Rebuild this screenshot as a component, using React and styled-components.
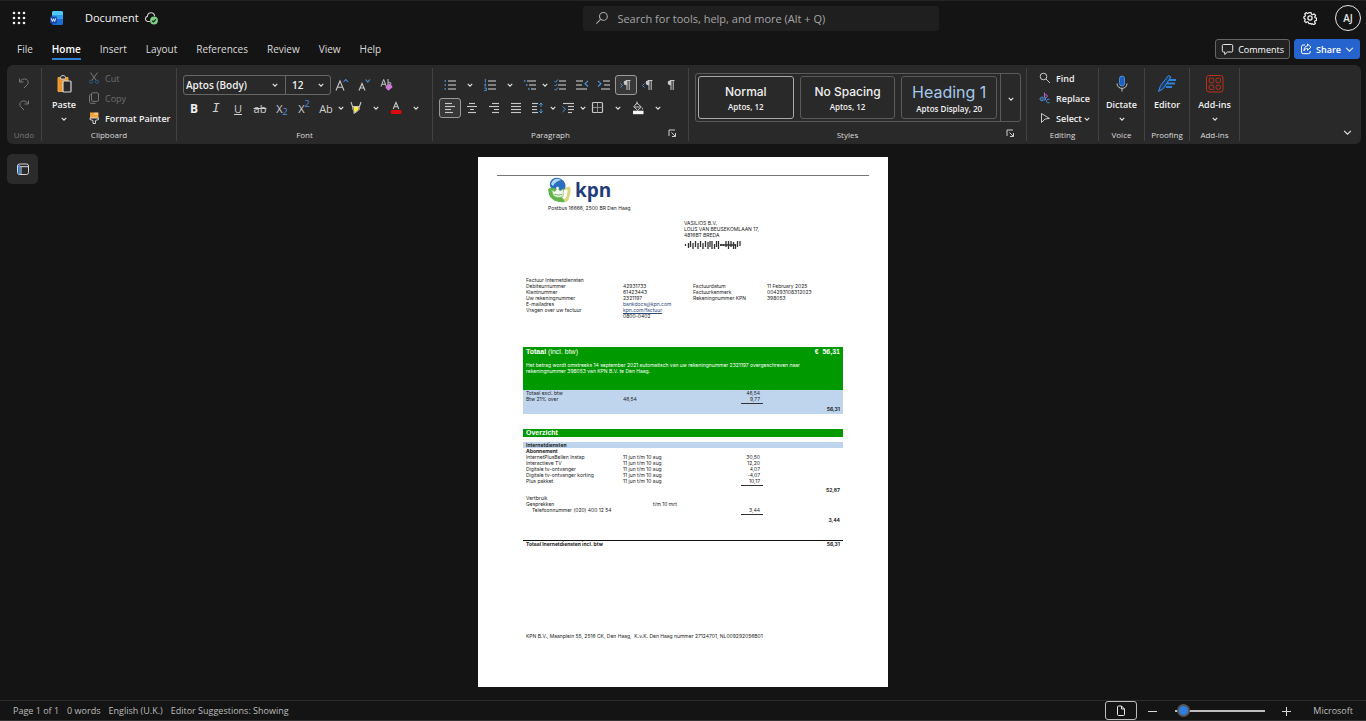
import { useState } from 'react'
import styled, { createGlobalStyle } from 'styled-components'

const tabs = ['File', 'Home', 'Insert', 'Layout', 'References', 'Review', 'View', 'Help']

const subscriptions = [
    { name: 'InternetPlusBellen Instap', period: '11 jun t/m 10 aug', amount: '30,50' },
    { name: 'Interactieve TV', period: '11 jun t/m 10 aug', amount: '12,20' },
    { name: 'Digitale tv-ontvanger', period: '11 jun t/m 10 aug', amount: '4,07' },
    { name: 'Digitale tv-ontvanger korting', period: '11 jun t/m 10 aug', amount: '-4,07' },
    { name: 'Plus pakket', period: '11 jun t/m 10 aug', amount: '10,17' },
]

const GREY = '#c8c8c8'
const BLUE = '#4a94e0'

export default function App() {
    return (
        <>
            <GlobalStyle />
            <Page>
                <TopBar />
                <MenuBar />
                <Ribbon />
                <Workspace>
                    <NavButton aria-label="Navigation pane">
                        <svg width="14" height="14" viewBox="0 0 14 14" fill="none">
                            <rect x="1.5" y="2" width="11" height="10.5" rx="2" stroke="#d5d5d5" />
                            <path d="M2 4.7H12.5M5 4.7V12.5" stroke="#d5d5d5" />
                            <path d="M3.3 3V12" stroke="#3f8ae0" strokeWidth="2" />
                        </svg>
                    </NavButton>
                    <Invoice />
                </Workspace>
                <StatusBar />
            </Page>
        </>
    )
}

function TopBar() {
    return (
        <Top>
            <TopLeft>
                <PlainButton aria-label="App launcher">
                    <svg width="14" height="14" viewBox="0 0 14 14" fill="#f0f0f0">
                        {[2, 7, 12].map(y => [2, 7, 12].map(x => <circle key={`${x}-${y}`} cx={x} cy={y} r="1.3" />))}
                    </svg>
                </PlainButton>
                <WordLogo />
                <DocumentName>
                    Document
                    <svg width="15" height="14" viewBox="0 0 15 14" fill="none">
                        <path d="M6 10.5H3.6A2.6 2.6 0 0 1 3.4 5.4C3.6 3.2 5 1.8 7 1.8S10.5 3.2 10.7 5.2" stroke="#d0d0d0" strokeWidth="1.1" />
                        <circle cx="10" cy="9.5" r="3.9" fill="#7fd087" />
                        <path d="M8.2 9.6L9.5 10.9L11.8 8.3" stroke="#141414" strokeWidth="1.1" />
                    </svg>
                </DocumentName>
            </TopLeft>
            <SearchBox>
                <svg width="14" height="14" viewBox="0 0 14 14" fill="none" stroke="#a8a8a8" strokeWidth="1.1">
                    <circle cx="8.4" cy="5.4" r="3.9" />
                    <path d="M5.6 8.3L1.3 12.6" />
                </svg>
                <input type="search" aria-label="Search" placeholder="Search for tools, help, and more (Alt + Q)" />
            </SearchBox>
            <TopRight>
                <PlainButton aria-label="Settings">
                    <svg width="14" height="14" viewBox="0 0 24 24" fill="none" stroke="#f0f0f0" strokeWidth="2.2" strokeLinejoin="round">
                        <path d="M10 2h4l.7 3 2.1.9 2.7-1.6 2.6 2.7-1.6 2.7.6 1.5 2.6.8v4l-2.6.7-.9 2 1.6 2.6-2.7 2.6-2.6-1.6-1.9.8L14 22h-4l-.8-2.6-2-.8-2.5 1.5L2 17.500l1.500-2.600-.8-1.900L1 12.300V9.700l2-1 .9-2L2.400 4.500 4.900 2l2.500 1.500 1.900-.8z" transform="translate(.6 .8) scale(.95)" />
                        <circle cx="12" cy="12" r="3.600" />
                    </svg>
                </PlainButton>
                <Avatar aria-label="Account">AJ</Avatar>
            </TopRight>
        </Top>
    )
}

function WordLogo() {
    return (
        <svg width="15" height="16" viewBox="0 0 15 16">
            <rect x="2" y="1" width="11" height="14" rx="1.6" fill="#1b6fd0" />
            <path d="M2 2.600A1.600 1.600 0 0 1 3.600 1H11.400A1.600 1.600 0 0 1 13 2.600V5.500H2Z" fill="#4fc9f5" />
            <path d="M2 5.500H13V9H2Z" fill="#2f9cf0" />
            <rect x="0" y="6.500" width="7" height="7" rx="1.200" fill="#1746a8" />
            <path d="M1.300 8.300L2.400 11.500L3.500 8.800L4.600 11.500L5.700 8.300" stroke="#fff" fill="none" strokeWidth=".9" />
        </svg>
    )
}

function MenuBar() {
    const [active, setActive] = useState('Home')

    return (
        <Menu>
            <Tabs>
                {tabs.map(tab => (
                    <Tab key={tab} $active={tab === active} onClick={() => setActive(tab)}>{tab}</Tab>
                ))}
            </Tabs>
            <Actions>
                <ActionButton>
                    <svg width="13" height="13" viewBox="0 0 13 13" fill="none" stroke="#e8e8e8">
                        <path d="M2.500 1.500H10.500A1.200 1.200 0 0 1 11.700 2.700V7.800A1.200 1.200 0 0 1 10.500 9H6.500L3.700 11.500V9H2.500A1.200 1.200 0 0 1 1.300 7.800V2.700A1.200 1.200 0 0 1 2.500 1.500Z" />
                    </svg>
                    Comments
                </ActionButton>
                <ActionButton $primary>
                    <svg width="12" height="12" viewBox="0 0 12 12" fill="none" stroke="#fff">
                        <path d="M5 2H3.200A1.700 1.700 0 0 0 1.500 3.700V9A1.700 1.700 0 0 0 3.200 10.700H8.500A1.700 1.700 0 0 0 10.200 9V8" />
                        <path d="M7.500 1L11 4.200L7.500 7.200V5.500C5.600 5.400 4.600 6.300 4 7.800C4 5 5.200 3.100 7.500 2.900Z" strokeLinejoin="round" />
                    </svg>
                    Share
                    <Chevron size={9} />
                </ActionButton>
            </Actions>
        </Menu>
    )
}

function Chevron({ size = 6 }) {
    return (
        <svg width={size} height={size} viewBox="0 0 8 8" fill="none">
            <path d="M1 2.500L4 5.500L7 2.500" stroke="#e4e4e4" strokeWidth={size > 6 ? 1 : 1.500} />
        </svg>
    )
}

function More({ label, wide }) {
    return <MoreButton aria-label={label} $wide={wide}><Chevron /></MoreButton>
}

function Launcher({ label }) {
    return (
        <LauncherButton aria-label={label}>
            <svg width="9" height="9" viewBox="0 0 9 9" fill="none" stroke="#d0d0d0">
                <path d="M1 7V1H7M3.500 3.500L7.300 7.300M7.500 4V7.500H4" />
            </svg>
        </LauncherButton>
    )
}

// list and alignment glyphs share one 14px box; each line is [x1, x2, y]
function Lines({ lines, children }) {
    return (
        <svg width="14" height="14" viewBox="0 0 14 14" fill="none">
            {lines.map(([from, to, y]) => (
                <path key={y} d={`M${from} ${y}H${to}`} stroke={GREY} strokeWidth="1.100" />
            ))}
            {children}
        </svg>
    )
}

function Ribbon() {
    return (
        <RibbonBar>
            <Group $width={35}>
                <Stack $center $pad={5} $gap={2}>
                    <Tool aria-label="Undo">
                        <svg width="12" height="12" viewBox="0 0 12 12" fill="none" stroke="#7a7a7a">
                            <path d="M1.500 1.500V5H5.500M1.700 4.800C3.500 2.300 6 1.300 8.200 2.300S10.800 6 9.300 7.700L6 11" />
                        </svg>
                    </Tool>
                    <Tool aria-label="Redo">
                        <svg width="12" height="12" viewBox="0 0 12 12" fill="none" stroke="#7a7a7a">
                            <path d="M10.500 1.500V5H6.500M10.300 4.800C8.500 2.300 6 1.300 3.800 2.300S1.200 6 2.700 7.700L6 11" />
                        </svg>
                    </Tool>
                </Stack>
                <GroupLabel $muted>Undo</GroupLabel>
            </Group>

            <Group $width={135}>
                <Row $tall>
                    <BigButton $width={44}>
                        <svg width="20" height="20" viewBox="0 0 20 20" fill="none">
                            <path d="M4 3.500H14V7H9V17.500H4Z" fill="#e8962e" stroke="#f0a23c" strokeLinejoin="round" />
                            <path d="M6.500 3.500A2.500 2 0 0 1 11.500 3.500V5H6.500Z" fill="#292929" stroke="#c8c8c8" />
                            <rect x="9" y="7" width="8" height="11" rx="1" fill="#292929" stroke="#d8d8d8" strokeWidth="1.200" />
                        </svg>
                        Paste
                        <Chevron />
                    </BigButton>
                    <Stack $left={2}>
                        <TextButton disabled>
                            <svg width="12" height="12" viewBox="0 0 12 12" fill="none">
                                <path d="M2.500 .5L8.200 8.500M9.500 .5L3.800 8.500" stroke="#7a7a7a" />
                                <circle cx="3" cy="9.700" r="1.600" stroke="#2f5a85" />
                                <circle cx="9" cy="9.700" r="1.600" stroke="#2f5a85" />
                            </svg>
                            Cut
                        </TextButton>
                        <TextButton disabled>
                            <svg width="12" height="12" viewBox="0 0 12 12" fill="none" stroke="#777">
                                <rect x="3.500" y=".8" width="7" height="8.500" rx="1.200" />
                                <path d="M3.200 2.500C2 2.500 1.500 3 1.500 4V9.500C1.500 10.700 2.200 11.300 3.200 11.300H7.500" />
                            </svg>
                            Copy
                        </TextButton>
                        <TextButton>
                            <svg width="12" height="12" viewBox="0 0 12 12" fill="none">
                                <rect x="2" y=".5" width="8.500" height="5.500" fill="#f2a33a" />
                                <path d="M7 .5V3M9 .5V3" stroke="#fff" strokeWidth=".7" />
                                <path d="M2 6H10.500V7.500L7.500 8.500V11.500H5V8.500L2 7.500Z" fill="#292929" stroke="#e0e0e0" strokeWidth=".9" />
                            </svg>
                            Format Painter
                        </TextButton>
                    </Stack>
                </Row>
                <GroupLabel>Clipboard</GroupLabel>
            </Group>

            <Group $width={256}>
                <Stack $pad={7} $left={6} $gap={3}>
                    <Row>
                        <Combo>
                            <Picker $width={101}>
                                <select aria-label="Font"><option>Aptos (Body)</option></select>
                                <Chevron />
                            </Picker>
                            <Picker $width={45} $size>
                                <select aria-label="Font size"><option>12</option></select>
                                <Chevron />
                            </Picker>
                        </Combo>
                        <Tool aria-label="Grow font">
                            <svg width="14" height="14" viewBox="0 0 14 14" fill="none">
                                <path d="M1 12.500L5 3L9 12.500M2.500 9.200H7.500" stroke={GREY} strokeWidth="1.100" />
                                <path d="M8.500 4L10.800 1.500L13 4" stroke={BLUE} strokeWidth="1.100" />
                            </svg>
                        </Tool>
                        <Tool aria-label="Shrink font">
                            <svg width="14" height="14" viewBox="0 0 14 14" fill="none">
                                <path d="M2 12.500L5 5.500L8 12.500M3.200 10H6.800" stroke={GREY} strokeWidth="1.100" />
                                <path d="M8.500 1.500L10.800 4L13 1.500" stroke={BLUE} strokeWidth="1.100" />
                            </svg>
                        </Tool>
                        <Tool aria-label="Clear formatting">
                            <svg width="14" height="14" viewBox="0 0 14 14" fill="none">
                                <path d="M2 8.500L4.700 1.500L7.300 8.500M3 6.200H6.500M9 1V8.500M9 5.200C9.500 4 12 4 12 6" stroke={GREY} />
                                <rect x="7" y="6.500" width="6" height="5" rx="1.200" transform="rotate(-40 10 9)" fill="#cf78d6" />
                            </svg>
                        </Tool>
                    </Row>
                    <Row>
                        <Tool aria-label="Bold"><b>B</b></Tool>
                        <Tool aria-label="Italic"><Slanted>I</Slanted></Tool>
                        <Tool aria-label="Underline"><u>U</u></Tool>
                        <Tool aria-label="Strikethrough"><s>ab</s></Tool>
                        <Tool aria-label="Subscript">X<Script as="sub">2</Script></Tool>
                        <Tool aria-label="Superscript">X<Script>2</Script></Tool>
                        <Tool aria-label="Change case">Ab</Tool>
                        <More label="Case options" />
                        <Tool aria-label="Highlight">
                            <svg width="14" height="14" viewBox="0 0 14 14" fill="none">
                                <path d="M2 1L3.500 5.500H10.500L12 1" stroke={GREY} strokeWidth="1.100" />
                                <path d="M4.300 6H9.700V8.500L5.500 12Z" fill="#ffef3c" />
                                <path d="M3.800 5.500V8.500L5 9.700V12.500L9 9.700L10.200 8.500V5.500" stroke={GREY} />
                            </svg>
                        </Tool>
                        <More label="Highlight colours" wide />
                        <Tool aria-label="Font colour">
                            <svg width="14" height="14" viewBox="0 0 14 14" fill="none">
                                <path d="M4.200 8L7 1.500L9.800 8M5.200 5.800H8.800" stroke={GREY} strokeWidth="1.100" />
                                <rect x="2" y="9" width="10.500" height="4" fill="#dc0a0a" />
                            </svg>
                        </Tool>
                        <More label="Font colours" wide />
                    </Row>
                </Stack>
                <GroupLabel>Font</GroupLabel>
            </Group>

            <Group $width={256}>
                <Stack $pad={7} $left={6} $gap={3}>
                    <Row>
                        <Tool aria-label="Bullets">
                            <Lines lines={[[5, 13, 3], [5, 13, 7], [5, 13, 11]]}>
                                <path d="M1.500 3H3M1.500 7H3M1.500 11H3" stroke={BLUE} strokeWidth="1.500" />
                            </Lines>
                        </Tool>
                        <More label="Bullet styles" wide />
                        <Tool aria-label="Numbering">
                            <Lines lines={[[5, 13, 3], [5, 13, 7], [5, 13, 11]]}>
                                <path d="M2.300 1V4.500M1.300 7H3.300M2.300 5.500V8.500M1.300 10H3.300V12.500H1.300" stroke={BLUE} />
                            </Lines>
                        </Tool>
                        <More label="Number styles" wide />
                        <Tool aria-label="Multilevel list">
                            <Lines lines={[[4, 13, 3], [6, 13, 7], [8, 13, 11]]}>
                                <path d="M1 3H2.500M3 7H4.500M5 11H6.500" stroke={BLUE} strokeWidth="1.500" />
                            </Lines>
                        </Tool>
                        <More label="List styles" />
                        <Tool aria-label="Checklist">
                            <Lines lines={[[6, 13, 3], [5, 13, 7], [6, 13, 11]]}>
                                <path d="M1.500 3L2.700 4.200L5 1.500M1.500 7L2.500 8L4 6M1.500 11L2.700 12.200L5 9.500" stroke={BLUE} />
                            </Lines>
                        </Tool>
                        <Tool aria-label="Decrease indent">
                            <Lines lines={[[1, 8, 3], [1, 7, 7], [1, 12, 11]]}>
                                <path d="M13 3L10 5.700L13 8.500" stroke={BLUE} strokeWidth="1.100" />
                            </Lines>
                        </Tool>
                        <Tool aria-label="Increase indent">
                            <Lines lines={[[6, 13, 3], [7, 13, 7], [4, 13, 11]]}>
                                <path d="M1 3L4 5.700L1 8.500" stroke={BLUE} strokeWidth="1.100" />
                            </Lines>
                        </Tool>
                        <Tool aria-label="Left to right" $on>
                            <Pilcrow d="M1.500 5.500L3.500 7.500L1.500 9.500" />
                        </Tool>
                        <Tool aria-label="Right to left">
                            <Pilcrow d="M3.500 5.500L1.500 7.500L3.500 9.500" />
                        </Tool>
                        <Tool aria-label="Show paragraph marks">
                            <Pilcrow />
                        </Tool>
                    </Row>
                    <Row>
                        <Tool aria-label="Align left" $on>
                            <Lines lines={[[2, 9, 2.500], [2, 12, 5.500], [2, 8, 8.500], [2, 10, 11.500]]} />
                        </Tool>
                        <Tool aria-label="Centre">
                            <Lines lines={[[4, 10, 2.500], [2, 12, 5.500], [5, 9, 8.500], [3, 11, 11.500]]} />
                        </Tool>
                        <Tool aria-label="Align right">
                            <Lines lines={[[5, 12, 2.500], [2, 12, 5.500], [7, 12, 8.500], [5, 12, 11.500]]} />
                        </Tool>
                        <Tool aria-label="Justify">
                            <Lines lines={[[2, 12, 2.500], [2, 12, 5.500], [2, 12, 8.500], [2, 12, 11.500]]} />
                        </Tool>
                        <Tool aria-label="Line spacing">
                            <Lines lines={[[1, 7, 2.500], [1, 6, 5.500], [1, 6, 8.500], [1, 7, 11.500]]}>
                                <path d="M10 2V6M10 8V12M8.300 3.800L10 2L11.700 3.800M8.300 10.200L10 12L11.700 10.200" stroke={BLUE} />
                            </Lines>
                        </Tool>
                        <More label="Line spacing options" />
                        <Tool aria-label="Special indent">
                            <Lines lines={[[2, 13, 2.500], [7, 13, 5.500], [7, 13, 8.500], [7, 11, 11.500]]}>
                                <path d="M1.500 5.500L4.500 8.200L1.500 11" stroke={BLUE} />
                            </Lines>
                        </Tool>
                        <More label="Indent options" />
                        <Tool aria-label="Borders">
                            <svg width="14" height="14" viewBox="0 0 14 14" fill="none" stroke={GREY}>
                                <rect x="1.500" y="1.500" width="10" height="10" rx="1" strokeWidth="1.200" />
                                <path d="M6.500 2V11.500M2 6.500H11.500" stroke="#8a8a8a" />
                            </svg>
                        </Tool>
                        <More label="Border options" wide />
                        <Tool aria-label="Shading">
                            <svg width="14" height="14" viewBox="0 0 14 14" fill="none">
                                <path d="M6 .5V3.500M6 2L10.300 6L6.500 9.300L2.700 5.800L6 2M3.200 6H9.800" stroke={GREY} />
                                <path d="M11.500 6.500C12.300 7.500 12.300 8.500 11.500 8.500S10.700 7.500 11.500 6.500Z" fill={GREY} />
                                <rect x="2" y="9.700" width="10.500" height="3.500" fill="#f2f6fa" />
                            </svg>
                        </Tool>
                        <More label="Shading colours" wide />
                    </Row>
                </Stack>
                <LabelRow>
                    <GroupLabel>Paragraph</GroupLabel>
                    <Launcher label="Paragraph settings" />
                </LabelRow>
            </Group>

            <Group $width={338}>
                <Stack $pad={5} $left={6}>
                    <Gallery>
                        <StyleCard $selected>Normal<small>Aptos, 12</small></StyleCard>
                        <StyleCard>No Spacing<small>Aptos, 12</small></StyleCard>
                        <StyleCard $heading>Heading 1<small>Aptos Display, 20</small></StyleCard>
                        <GalleryMore aria-label="More styles"><Chevron /></GalleryMore>
                    </Gallery>
                </Stack>
                <LabelRow>
                    <GroupLabel>Styles</GroupLabel>
                    <Launcher label="Style settings" />
                </LabelRow>
            </Group>

            <Group $width={72}>
                <Stack $left={12}>
                    <TextButton>
                        <svg width="12" height="12" viewBox="0 0 12 12" fill="none" stroke={GREY}>
                            <circle cx="4.500" cy="4.500" r="3.300" />
                            <path d="M7 7L11 11" />
                        </svg>
                        Find
                    </TextButton>
                    <TextButton>
                        <svg width="12" height="12" viewBox="0 0 12 12" fill="none">
                            <path d="M5.500 .5V5.500M5.500 3.500C6 2.300 8.500 2.500 8.300 4.200S6 5.700 5.500 4.700" stroke="#b46ac0" />
                            <path d="M4.500 5.500C2.500 4.500 1 5.500 1 7S2.500 9.200 4.500 8.300M2.500 7H7M5.500 5.500L7 7L5.500 8.500M10.500 7.500C8.500 6.500 7.500 8 7.500 9.200S9 11.500 10.500 10.500" stroke={BLUE} />
                        </svg>
                        Replace
                    </TextButton>
                    <TextButton>
                        <svg width="12" height="12" viewBox="0 0 12 12" fill="none" stroke={GREY}>
                            <path d="M2.500 1.500L10.500 6.500L6 7L2.500 10.500Z" strokeLinejoin="round" />
                        </svg>
                        <span>Select <Chevron /></span>
                    </TextButton>
                </Stack>
                <GroupLabel>Editing</GroupLabel>
            </Group>

            <Group $width={46}>
                <BigButton>
                    <svg width="20" height="20" viewBox="0 0 20 20" fill="none">
                        <rect x="7.500" y="2" width="5" height="10" rx="2.500" fill="#1c5fc4" stroke="#5aa0f0" strokeWidth=".8" />
                        <path d="M5 9.500C5 16 15 16 15 9.500M10 14.500V17.500" stroke={GREY} />
                    </svg>
                    Dictate
                    <Chevron />
                </BigButton>
                <GroupLabel>Voice</GroupLabel>
            </Group>

            <Group $width={45}>
                <BigButton>
                    <svg width="20" height="20" viewBox="0 0 20 20" fill="none">
                        <path d="M12 6H19M10 9.500H18M9 13H15" stroke="#2f83e0" strokeWidth="2" />
                        <path d="M1.500 17.500L3.500 11.500L11.500 1.500L14 3L6.500 14.500Z" fill="#1d3f70" stroke="#3f8ee6" strokeLinejoin="round" />
                    </svg>
                    Editor
                </BigButton>
                <GroupLabel>Proofing</GroupLabel>
            </Group>

            <Group $width={50}>
                <BigButton>
                    <svg width="20" height="20" viewBox="0 0 20 20" fill="none" stroke="#b8321c">
                        <rect x="1.500" y="1.500" width="16.500" height="16.500" rx="2.500" />
                        <rect x="4.200" y="4.200" width="4.500" height="4.500" rx="1" />
                        <rect x="11" y="4.200" width="4.500" height="4.500" rx="1" />
                        <rect x="4.200" y="11" width="4.500" height="4.500" rx="1" />
                        <rect x="11" y="11" width="4.500" height="4.500" rx="2" />
                    </svg>
                    Add-ins
                    <Chevron />
                </BigButton>
                <GroupLabel>Add-ins</GroupLabel>
            </Group>

            <Collapse aria-label="Collapse ribbon"><Chevron size={9} /></Collapse>
        </RibbonBar>
    )
}

function Pilcrow({ d }) {
    return (
        <svg width="14" height="14" viewBox="0 0 14 14" fill="none">
            {d && <path d={d} stroke={BLUE} />}
            <path d="M11 2.500H7A2.300 2.300 0 0 0 7 7.200H8V2.500Z" fill={GREY} />
            <path d="M8 2.500V12M10.200 2.500V12M7 2.500H11.500" stroke={GREY} />
        </svg>
    )
}

function Invoice() {
    return (
        <Sheet>
            <TopRule />
            <Brand>
                <svg width="25" height="27" viewBox="0 0 25 27">
                    <path d="M13 11.500L22 9.500C23.500 15 21.500 21 19 25L11 23Z" fill="#d9d67c" />
                    <path d="M15 13.500L19.500 12.500C20 16 18.500 19.500 17 22L13 21Z" fill="#fff" />
                    <ellipse cx="9.700" cy="8" rx="8" ry="7" transform="rotate(25 9.700 8)" fill="#2a6fc0" />
                    <path d="M3 7C4.500 2 9.500 .5 13 3C10 4 6.500 5.500 5 9Z" fill="#b4d6f4" />
                    <path d="M0 12C4 9.500 7 11 9 12.500L17 25C10 26 3 23 1 17.500Z" fill="#5fb54a" />
                    <path d="M3.500 13L7 14.500L9.500 10.500L12 14L15.500 12L15 19.500C11.500 21 8 20.500 5.500 18.500Z" fill="#f4f8f0" stroke="#8cbf6a" strokeWidth=".8" />
                    <path d="M6.500 17.200C9 18.200 12 18.200 14 17.500" stroke="#5fb54a" fill="none" />
                    <circle cx="9.500" cy="11" r="1.300" fill="#fff" />
                </svg>
                kpn
            </Brand>
            <Sender>Postbus 16666, 2500 BR Den Haag</Sender>
            <Recipient>
                VASILIOS B.V.<br />
                LOUS VAN BEUSEKOMLAAN 17,<br />
                4816BT BREDA
                <svg width="58" height="8" viewBox="0 0 58 8" stroke="#333" strokeWidth="1.300" fill="none">
                    <path d="M1.500 3V5M4.500 2V7M6.500 0V6M9 2V8M11.500 0V6M14 2V8M16.500 0V6M19 2V8M21.500 0V6M24 1V8M26 0V6M28 0V8M30.500 3V8M32.500 0V6M34.500 0V8M37 3V5M39.500 3V5M42 0V6M44.500 0V8M47 0V6M49.500 1V8M51.500 3V8M53.500 0V6M56 0V5M36 4H52" />
                </svg>
            </Recipient>
            <Details>
                <div>
                    Factuur Internetdiensten<br />
                    Debiteurnummer<br />
                    Klantnummer<br />
                    Uw rekeningnummer<br />
                    E-mailadres<br />
                    Vragen over uw factuur
                </div>
                <div>
                    <br />
                    42931733<br />
                    61423443<br />
                    2321197<br />
                    <MailLink href="#mail">bankdocs@kpn.com</MailLink><br />
                    <MailLink href="#factuur" $underline>kpn.com/factuur</MailLink><br />
                    0800-0402
                </div>
                <div>
                    <br />
                    Factuurdatum<br />
                    Factuurkenmerk<br />
                    Rekeningnummer KPN
                </div>
                <div>
                    <br />
                    11 February 2025<br />
                    004293108312023<br />
                    398053
                </div>
            </Details>
            <TotalBox>
                <TotalTitle>
                    <span><b>Totaal</b> (incl. btw)</span>
                    <b>€&nbsp; 56,31</b>
                </TotalTitle>
                <p>
                    Het betrag wordt omstreeks 14 september 2021 automatisch van uw rekeningnummer 2321197 overgeschreven naar<br />
                    rekeningnummer 398053 van KPN B.V. te Den Haag.
                </p>
            </TotalBox>
            <Table $tinted>
                <Columns />
                <tbody>
                    <tr><td>Totaal excl. btw</td><td /><Amount>46,54</Amount><td /></tr>
                    <tr><td>Btw 21% over</td><td>46,54</td><Amount $line>9,77</Amount><td /></tr>
                    <SumRow><td colSpan="3" /><Amount>56,31</Amount></SumRow>
                </tbody>
            </Table>
            <SectionTitle>Overzicht</SectionTitle>
            <Table>
                <Columns />
                <tbody>
                    <SubHead><th colSpan="4">Internetdiensten</th></SubHead>
                    <tr><th colSpan="4">Abonnement</th></tr>
                    {subscriptions.map((item, i) => (
                        <tr key={item.name}>
                            <td>{item.name}</td>
                            <td>{item.period}</td>
                            <Amount $line={i === subscriptions.length - 1}>{item.amount}</Amount>
                            <td />
                        </tr>
                    ))}
                    <SumRow><td colSpan="3" /><Amount>52,87</Amount></SumRow>
                    <tr><td>Vertbruik</td><td colSpan="3" /></tr>
                    <tr><td>Gesprekken</td><IndentCell $by={30}>t/m 10 mrt</IndentCell><td colSpan="2" /></tr>
                    <tr><IndentCell $by={6}>Telefoonnummer (020) 400 12 54</IndentCell><td /><Amount $line>3,44</Amount><td /></tr>
                    <SumRow><td colSpan="3" /><Amount>3,44</Amount></SumRow>
                </tbody>
            </Table>
            <GrandTotal>
                <span>Totaal Inernetdiensten incl. btw</span>
                <span>56,31</span>
            </GrandTotal>
            <Footnote>KPN B.V., Maanplein 55, 2516 CK, Den Haag, &nbsp;K.v.K. Den Haag nummer 27124701, NL009292056B01</Footnote>
        </Sheet>
    )
}

function Columns() {
    return (
        <colgroup>
            <col width="97" />
            <col width="121" />
            <col width="22" />
            <col width="80" />
        </colgroup>
    )
}

function StatusBar() {
    const [zoom, setZoom] = useState(2)

    return (
        <Status>
            <StatusInfo>
                <span>Page 1 of 1</span>
                <span>0 words</span>
                <span>English (U.K.)</span>
                <span>Editor Suggestions: Showing</span>
            </StatusInfo>
            <ZoomArea>
                <ViewButton aria-label="Page view">
                    <svg width="10" height="12" viewBox="0 0 10 12" fill="none" stroke="#e8e8e8">
                        <path d="M2.500 1H5.500L8.500 4V9.500A1 1 0 0 1 7.500 10.500H2.500A1 1 0 0 1 1.500 9.500V2A1 1 0 0 1 2.500 1ZM5.500 1V4H8.500" />
                    </svg>
                </ViewButton>
                <PlainButton aria-label="Zoom out">
                    <svg width="10" height="10" viewBox="0 0 10 10"><path d="M1 5.500H10" stroke="#d8d8d8" /></svg>
                </PlainButton>
                <Slider type="range" aria-label="Zoom" value={zoom} onChange={e => setZoom(e.target.value)} />
                <PlainButton aria-label="Zoom in">
                    <svg width="10" height="10" viewBox="0 0 10 10"><path d="M1 5.500H10M5.500 1V10" stroke="#d8d8d8" /></svg>
                </PlainButton>
                <Vendor>Microsoft</Vendor>
            </ZoomArea>
        </Status>
    )
}

const GlobalStyle = createGlobalStyle`
    * {
        box-sizing: border-box;
    }
    body {
        margin: 0;
        background-color: #141414;
        color: #e6e6e6;
        font-family: 'Open Sans', 'Noto Sans', sans-serif;
        font-size: 10px;
    }
    button, input, select {
        font: inherit;
        color: inherit;
    }
    button {
        padding: 0;
        border: none;
        background: none;
        cursor: pointer;
    }
    svg {
        flex-shrink: 0;
    }
`
const Page = styled.div`
    min-height: 100vh;
    display: flex;
    flex-direction: column;
    border-top: 1px solid #242424;
    border-bottom: 1px solid #333;
`
const Top = styled.header`
    height: 34px;
    display: grid;
    grid-template-columns: 1.64fr 1fr 1.2fr;
    align-items: center;
    font-size: 11px;
`
const PlainButton = styled.button`
    display: flex;
`
const TopLeft = styled.div`
    display: flex;
    align-items: center;
    gap: 20px;
    padding: 0 0 1px 12px;
    ${PlainButton} {
        padding-right: 4px;
    }
`
const DocumentName = styled.div`
    display: flex;
    align-items: center;
    gap: 5px;
    color: #f4f4f4;
`
const SearchBox = styled.label`
    height: 25px;
    display: flex;
    align-items: center;
    gap: 8px;
    padding: 0 12px;
    border-radius: 3px;
    background-color: #1f1f1f;
    input {
        flex: 1;
        padding: 0;
        border: none;
        outline: none;
        background: none;
    }
    input::placeholder {
        color: #a6a6a6;
        opacity: 1;
    }
`
const TopRight = styled.div`
    display: flex;
    align-items: center;
    justify-content: flex-end;
    gap: 18px;
    padding-right: 5px;
`
const Avatar = styled.button`
    width: 26px;
    height: 26px;
    border: 1px solid #e8e8e8;
    border-radius: 50%;
    font-size: 10px;
    font-weight: 600;
`
const Menu = styled.nav`
    height: 30px;
    display: flex;
    justify-content: space-between;
    padding: 4px 6px 0 17px;
`
const Tabs = styled.div`
    display: flex;
    align-items: flex-start;
    gap: 19px;
`
const Tab = styled.button`
    height: 21px;
    font-size: 10px;
    border-bottom: 2px solid ${props => props.$active ? '#2f7fd6' : 'transparent'};
    color: ${props => props.$active ? '#fff' : '#dcdcdc'};
    font-weight: ${props => props.$active ? 600 : 400};
`
const Actions = styled.div`
    display: flex;
    align-items: flex-start;
    gap: 4px;
`
const ActionButton = styled.button`
    height: 20px;
    display: flex;
    align-items: center;
    gap: 4px;
    padding: 0 5px;
    border: 1px solid ${props => props.$primary ? '#2564cf' : '#666'};
    border-radius: 3px;
    background-color: ${props => props.$primary ? '#2564cf' : '#222'};
    color: #fff;
    font-size: 9px;
    font-weight: ${props => props.$primary ? 600 : 400};
`
const RibbonBar = styled.section`
    min-height: 79px;
    display: flex;
    margin: 0 5px 0 7px;
    padding: 3px 0;
    border-radius: 6px;
    background-color: #292929;
`
const Group = styled.div`
    width: ${props => props.$width}px;
    display: flex;
    flex-direction: column;
    justify-content: space-between;
    border-right: 1px solid #424242;
`
const GroupLabel = styled.div`
    flex-grow: 0;
    font-size: 8px;
    line-height: 12px;
    text-align: center;
    color: ${props => props.$muted ? '#777' : '#dcdcdc'};
`
const LabelRow = styled.div`
    display: flex;
    ${GroupLabel} {
        flex: 1;
    }
`
const LauncherButton = styled.button`
    width: 20px;
    height: 10px;
    display: flex;
`
const Row = styled.div`
    display: flex;
    align-items: ${props => props.$tall ? 'flex-start' : 'center'};
`
const Stack = styled.div`
    display: flex;
    flex-direction: column;
    align-items: ${props => props.$center ? 'center' : 'stretch'};
    gap: ${props => props.$gap || 0}px;
    padding-top: ${props => props.$pad || 0}px;
    padding-left: ${props => props.$left || 0}px;
`
const Tool = styled.button`
    width: 22px;
    height: 20px;
    display: flex;
    align-items: center;
    justify-content: center;
    border: 1px solid ${props => props.$on ? '#9a9a9a' : 'transparent'};
    border-radius: 3px;
    background-color: ${props => props.$on ? '#383838' : 'transparent'};
    color: #d0d0d0;
    font-size: 11px;
    b {
        font-size: 12px;
        color: #f0f0f0;
    }
`
const Slanted = styled.i`
    font-family: 'Liberation Mono', monospace;
    font-size: 13px;
`
const Script = styled.sup`
    font-size: 9px;
    line-height: 10px;
    color: #4a94e0;
    align-self: ${props => props.as === 'sub' ? 'flex-end' : 'flex-start'};
`
const MoreButton = styled.button`
    width: ${props => props.$wide ? 18 : 8}px;
    height: 20px;
    display: flex;
    align-items: center;
    justify-content: center;
`
const BigButton = styled.button`
    width: ${props => props.$width ? props.$width + 'px' : '100%'};
    display: flex;
    flex-direction: column;
    align-items: center;
    gap: 2px;
    padding-top: 6px;
    font-size: 9px;
    font-weight: 600;
    line-height: 18px;
    color: #f0f0f0;
`
const TextButton = styled.button`
    height: 20px;
    display: flex;
    align-items: center;
    gap: 5px;
    font-size: 9px;
    font-weight: 600;
    color: #f0f0f0;
    white-space: nowrap;
    &:disabled {
        color: #6e6e6e;
        font-weight: 400;
    }
`
const Combo = styled.div`
    display: flex;
    height: 20px;
    border: 1px solid #666;
    border-radius: 3px;
`
const Picker = styled.label`
    width: ${props => props.$width}px;
    display: flex;
    align-items: center;
    padding-right: ${props => props.$size ? 6 : 7}px;
    border-left: ${props => props.$size ? '1px solid #666' : 'none'};
    select {
        flex: 1;
        height: 18px;
        padding: 0 0 0 ${props => props.$size ? 6 : 2}px;
        border: none;
        appearance: none;
        background: none;
        color: #f0f0f0;
        font-weight: 600;
    }
`
const Gallery = styled.div`
    width: 326px;
    height: 49px;
    display: flex;
    gap: 6px;
    padding: 2px 0 2px 2px;
    border: 1px solid #5a5a5a;
    border-radius: 3px;
`
const StyleCard = styled.button`
    flex: 1;
    display: flex;
    flex-direction: column;
    align-items: center;
    justify-content: center;
    border: 1px solid ${props => props.$selected ? '#a8a8a8' : '#5a5a5a'};
    border-radius: 3px;
    font-family: Inter, sans-serif;
    font-size: ${props => props.$heading ? 16 : 12}px;
    font-weight: ${props => props.$heading ? 400 : 500};
    line-height: ${props => props.$heading ? 22 : 18}px;
    color: ${props => props.$heading ? '#a5c8ea' : '#f0f0f0'};
    small {
        font-family: 'Open Sans', sans-serif;
        font-size: 8px;
        font-weight: 600;
        line-height: 12px;
        color: #f0f0f0;
    }
`
const GalleryMore = styled.button`
    width: 20px;
    margin: -2px 0 -2px -3px;
    border-left: 1px solid #5a5a5a;
`
const Collapse = styled.button`
    margin-left: auto;
    padding: 0 9px 1px;
    align-self: flex-end;
`
const Workspace = styled.main`
    flex: 1;
    display: grid;
    grid-template-columns: 1fr 410px 1fr;
    align-items: start;
    padding-bottom: 13px;
`
const NavButton = styled.button`
    width: 31px;
    height: 30px;
    display: flex;
    align-items: center;
    justify-content: center;
    margin: 10px 0 0 7px;
    border-radius: 5px;
    background-color: #2b2b2b;
`
const Sheet = styled.article`
    min-height: 530px;
    margin-top: 13px;
    padding: 18px 45px 48px;
    display: flex;
    flex-direction: column;
    background-color: #fff;
    color: #222;
    font-family: Inter, 'Liberation Sans', sans-serif;
    font-size: 5px;
    line-height: 6px;
`
const TopRule = styled.div`
    margin: 0 -26px;
    border-top: 1px solid #777;
`
const Brand = styled.div`
    display: flex;
    align-items: center;
    gap: 2px;
    height: 28px;
    margin-left: 25px;
    color: #1f3d7a;
    font-family: 'Open Sans', sans-serif;
    font-size: 19px;
    font-weight: 700;
    line-height: 24px;
`
const Sender = styled.div`
    margin-left: 25px;
    padding-top: 1px;
`
const Recipient = styled.address`
    margin: 9px 0 0 161px;
    font-style: normal;
    svg {
        display: block;
        margin-top: 3px;
    }
`
const Details = styled.div`
    display: grid;
    grid-template-columns: 97px 70px 74px 1fr;
    margin: 28px 0 28px 3px;
`
const MailLink = styled.a`
    color: #2a4a78;
    text-decoration: ${props => props.$underline ? 'underline' : 'none'};
`
const TotalBox = styled.section`
    min-height: 43px;
    padding: 0 3px;
    background-color: #009900;
    color: #fff;
    p {
        margin: 6px 0 0;
        white-space: nowrap;
    }
`
const TotalTitle = styled.div`
    display: flex;
    justify-content: space-between;
    font-family: 'Liberation Sans', Arial, sans-serif;
    font-size: 7px;
    line-height: 9px;
`
const Table = styled.table`
    width: 100%;
    border-collapse: collapse;
    table-layout: fixed;
    background-color: ${props => props.$tinted ? '#bfd5ee' : 'transparent'};
    td, th {
        height: 6px;
        padding: 0 3px;
        text-align: left;
        vertical-align: top;
        white-space: nowrap;
    }
`
const Amount = styled.td`
    &&& {
        text-align: right;
        padding-bottom: ${props => props.$line ? 1 : 0}px;
        border-bottom: ${props => props.$line ? '1px solid #333' : 'none'};
    }
`
const IndentCell = styled.td`
    &&& {
        padding-left: ${props => props.$by + 3}px;
    }
`
const SumRow = styled.tr`
    height: 10px;
    font-weight: 700;
    &&& td {
        vertical-align: middle;
    }
`
const SectionTitle = styled.h2`
    margin: 15px 0 5px;
    padding-left: 3px;
    background-color: #009900;
    color: #fff;
    font-family: 'Liberation Sans', Arial, sans-serif;
    font-size: 7px;
    line-height: 8px;
`
const SubHead = styled.tr`
    background-color: #bfd5ee;
`
const GrandTotal = styled.div`
    display: flex;
    justify-content: space-between;
    margin-top: 15px;
    padding: 0 3px;
    border-top: 1px solid #111;
    font-weight: 700;
`
const Footnote = styled.footer`
    margin-top: auto;
    padding-left: 3px;
`
const Status = styled.footer`
    height: 20px;
    display: flex;
    align-items: center;
    justify-content: space-between;
    padding: 0 13px;
    border-top: 1px solid #2c2c2c;
    color: #bdbdbd;
    font-size: 9px;
`
const StatusInfo = styled.div`
    display: flex;
    gap: 8px;
`
const ZoomArea = styled.div`
    display: flex;
    align-items: center;
    gap: 10px;
`
const ViewButton = styled.button`
    width: 32px;
    height: 19px;
    display: flex;
    align-items: center;
    justify-content: center;
    border: 1px solid #bdbdbd;
    border-radius: 3px;
`
const Slider = styled.input`
    width: 90px;
    height: 14px;
    margin: 0 6px 0 8px;
    appearance: none;
    background: none;
    &::-webkit-slider-runnable-track {
        height: 2px;
        background-color: #bdbdbd;
    }
    &::-webkit-slider-thumb {
        appearance: none;
        width: 13px;
        height: 13px;
        margin-top: -6px;
        border: 2px solid #555;
        border-radius: 50%;
        background-color: #2f7de0;
    }
`
const Vendor = styled.span`
    margin-left: 12px;
`
